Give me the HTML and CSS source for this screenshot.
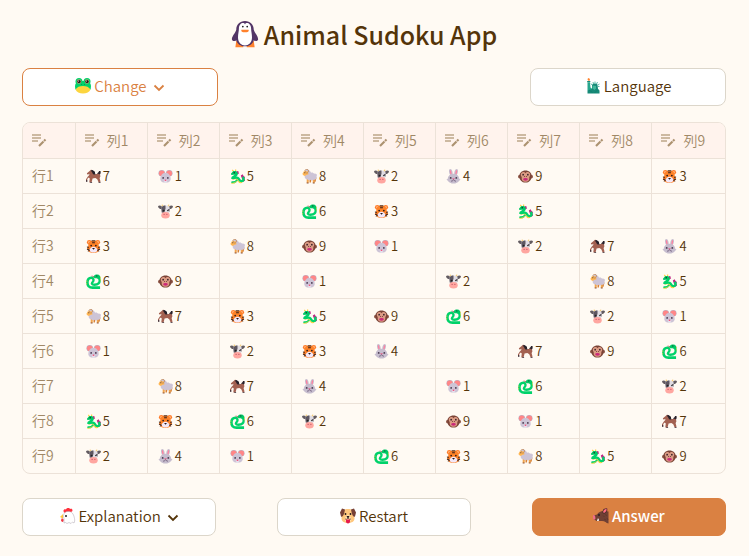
FILE: index.html
```html
<!DOCTYPE html>
<html lang="ja">
<head>
<meta charset="utf-8">
<meta name="viewport" content="width=device-width, initial-scale=1">
<title>Animal Sudoku App</title>
<link rel="stylesheet" href="styles.css">
</head>
<body>
<svg class="sprite" aria-hidden="true">
  <symbol id="mouse" viewBox="0 0 32 32">
    <circle cx="8" cy="9" r="7" fill="#b9b3c6"/><circle cx="24" cy="9" r="7" fill="#b9b3c6"/>
    <circle cx="8" cy="9" r="6" fill="#ff8687"/><circle cx="24" cy="9" r="6" fill="#ff8687"/>
    <path d="M16 8c7 0 10 6 11 12 1 6-5 9-11 9S4 26 5 20C6 14 9 8 16 8z" fill="#cdc4d6"/>
    <circle cx="11" cy="19" r="1.800" fill="#45344b"/><circle cx="21" cy="19" r="1.800" fill="#45344b"/>
    <path d="M12 24h8l-2 5h-4z" fill="#e8e1ee"/><ellipse cx="16" cy="24" rx="2" ry="1.500" fill="#f24d75"/>
  </symbol>
  <symbol id="cow" viewBox="0 0 32 32">
    <path d="M9 6C7 4 8 1 9 0c0 3 3 4 5 5M23 6c2-2 1-5 0-6 0 3-3 4-5 5" fill="#f3c76c"/>
    <path d="M8 5C4 2 1 4 0 5c1 5 4 6 8 6zM24 5c4-3 7-1 8 0-1 5-4 6-8 6z" fill="#625b60"/>
    <path d="M16 3c6 0 9 3 9 9l-2 11H9L7 12c0-6 3-9 9-9z" fill="#e0dce3"/>
    <path d="M7 8c2-4 5-5 9-5v7l-3 9-5-1zM21 11l4-1-1 7z" fill="#5d5660"/>
    <circle cx="12" cy="14" r="2" fill="#222"/><circle cx="21" cy="14" r="1.6" fill="#222"/>
    <ellipse cx="16" cy="24" rx="9" ry="7" fill="#ffa6a0"/>
    <circle cx="13" cy="22" r="1.3" fill="#bb4b60"/><circle cx="19" cy="22" r="1.3" fill="#bb4b60"/>
  </symbol>
  <symbol id="tiger" viewBox="0 0 32 32">
    <circle cx="7" cy="7" r="5" fill="#ff7924"/><circle cx="25" cy="7" r="5" fill="#ff7924"/>
    <circle cx="7" cy="7" r="2.5" fill="#ffb078"/><circle cx="25" cy="7" r="2.5" fill="#ffb078"/>
    <path d="M16 3c8 0 11 5 11 11l3 7c-2 6-7 9-14 9S4 27 2 21l3-7C5 8 8 3 16 3z" fill="#ff8227"/>
    <path d="M10 19c3-3 9-3 12 0l3 4c-2 5-5 6-9 6s-7-1-9-6z" fill="#f2e7f7"/>
    <path d="M12 4h8M13 8h6M2 17l4 1M2 22l5 0M4 26l4-2M30 17l-4 1M30 22l-5 0M28 26l-4-2" stroke="#25191c" stroke-width="2" fill="none"/>
    <circle cx="11" cy="14" r="1.800" fill="#25191c"/><circle cx="21" cy="14" r="1.800" fill="#25191c"/>
    <path d="M13 19h6l-3 4z" fill="#25191c"/>
  </symbol>
  <symbol id="rabbit" viewBox="0 0 32 32">
    <path d="M9 13C5 6 6 0 9 0c4 0 6 7 5 13M23 13c4-7 3-13 0-13-4 0-6 7-5 13" fill="#c6bdce"/>
    <path d="M10 12C8 7 8 2 9 2c2 0 3 5 3 10M22 12c2-5 2-10 1-10-2 0-3 5-3 10" fill="#ff82a0"/>
    <path d="M16 10c7 0 12 5 12 10l3 3-3 2c-2 4-7 6-12 6S6 29 4 25l-3-2 3-3c0-5 5-10 12-10z" fill="#c6bdce"/>
    <circle cx="10" cy="19" r="2" fill="#49394f"/><circle cx="22" cy="19" r="2" fill="#49394f"/>
    <path d="M13 20h6l-3 3z" fill="#ee396b"/><path d="M11 26q3 0 5-3 2 3 5 3" stroke="#6d5a78" stroke-width="2" fill="none"/>
  </symbol>
  <symbol id="dragon" viewBox="0 0 32 32">
    <path d="M23 14l4-3 2 4 3 2-1 4 1 4-4 2zM14 4l4 1 1 5-4 1z" fill="#c02783"/>
    <path d="M8 6L5 2M12 5V1" stroke="#ffce3d" stroke-width="2.500"/>
    <path d="M5 21c4 0 8-2 11 2 3 5 6 7 10 5" stroke="#ffd348" stroke-width="3" fill="none"/>
    <path d="M13 8c5 6-8 8-8 11 3 1 10-3 13 1 2 3 3 6 7 6 5-1 5-5 2-9" stroke="#00d26a" stroke-width="5" fill="none"/>
    <path d="M15 23c-2 5-6 6-12 5" stroke="#00d26a" stroke-width="4" fill="none"/>
    <path d="M2 10l5-6h6l3 4-2 5-6-1-5 1z" fill="#00c865"/>
    <path d="M3 31q9 0 12-6" stroke="#ffd348" stroke-width="2" fill="none"/>
    <circle cx="9" cy="8" r="1.500" fill="#222"/>
  </symbol>
  <symbol id="snake" viewBox="0 0 32 32">
    <path d="M18 6l-6-2M18 6l-6 2" stroke="#ef315b" stroke-width="1.500"/>
    <path d="M13 8C6 7 3 12 3 18c0 8 5 11 11 11h16" fill="none" stroke="#00d26a" stroke-width="5.500"/>
    <path d="M12 8c4 1 5 5 3 8-4 4-3 7 3 7 8 0 12-4 11-11-1-4-3-6-6-6" fill="none" stroke="#00d26a" stroke-width="5"/>
    <path d="M16 6c1-4 4-5 8-5 5 0 7 4 7 8l-5 1-4-1h-4z" fill="#00c865"/>
    <path d="M31 6v10M2 14l-1 10" stroke="#f4c83e" stroke-width="1.500" stroke-dasharray="3 2"/>
    <circle cx="23" cy="4" r="1.500" fill="#174d35"/>
  </symbol>
  <symbol id="horse" viewBox="0 0 32 32">
    <path d="M24 14c-1-7 3-6 4-10h3c1 6-1 8-3 9v6z" fill="#272029"/>
    <path d="M2 9l7-6 2-2 3 4 4 6 9-1c4 2 5 6 2 9l2 8-4 2-3-7-4-3-6 1-2 8-5 1 1-9-2-2-3 3-1 5H0v-4l4-6 3-3v-3l-3 2-2-2z" fill="#a36151"/>
    <path d="M10 3l4-1 5 4 1 6-5-1-2-4z" fill="#272029"/>
    <path d="M0 24h3v3H0zM9 28h4v2H9zM27 28h4v2h-4z" fill="#352833"/>
  </symbol>
  <symbol id="sheep" viewBox="0 0 32 32">
    <path d="M10 20h5l-1 10h-4zM23 20h5l-1 10h-4z" fill="#f2a64e"/>
    <path d="M16 22h4l-1 7h-3zM28 18h3l-2 9h-3z" fill="#d88338"/>
    <path d="M7 4c2-5 6-4 8-1 3 0 3 4 5 5 3-1 4 1 6 2 5-1 7 3 5 6 1 5-3 8-6 7-3 3-6 1-7 0-4 2-6 0-7-1-5 0-6-5-5-8z" fill="#cdc4d6"/>
    <path d="M4 5h8l2 6-5 2-3 2-4-2-1-3z" fill="#ffb654"/>
    <path d="M9 7c-5-3-2-7 2-6 5 1 3 8-2 8" fill="none" stroke="#c18b5b" stroke-width="2"/>
    <circle cx="6" cy="8" r="1.2" fill="#352833"/><path d="M10 29h4v2h-4zM23 29h4v2h-4z" fill="#8a543f"/>
  </symbol>
  <symbol id="monkey" viewBox="0 0 32 32">
    <circle cx="4" cy="16" r="4" fill="#8d5546"/><circle cx="28" cy="16" r="4" fill="#8d5546"/>
    <path d="M16 3c8 0 13 5 13 12 0 9-5 14-13 14S3 24 3 15C3 8 8 3 16 3z" fill="#7b4437"/>
    <path d="M16 9c2-4 10-4 10 3 0 3-2 4-2 6 1 6-3 9-8 9s-9-3-8-9c0-2-2-3-2-6 0-7 8-7 10-3z" fill="#dc9b84"/>
    <circle cx="11" cy="12" r="1.800" fill="#382329"/><circle cx="21" cy="12" r="1.800" fill="#382329"/>
    <path d="M13 16h2M17 16h2" stroke="#743c3d" stroke-width="2"/><ellipse cx="16" cy="22" rx="5" ry="3" fill="#cb2879"/>
  </symbol>
  <symbol id="penguin" viewBox="0 0 32 32">
    <path d="M6 24h8v7H5zM18 24h8l1 7h-9z" fill="#ff822d"/>
    <path d="M16 1c6 0 10 4 10 10 1 4 5 7 5 11 0 2-3 3-5 1-1 4-5 7-10 7S7 27 6 23c-2 2-5 1-5-1 0-4 4-7 5-11C6 5 10 1 16 1z" fill="#533566"/>
    <path d="M16 5c1-3 7-2 7 5 0 3 1 6 1 10 0 6-4 9-8 9s-8-3-8-9c0-4 1-7 1-10 0-7 6-8 7-5z" fill="#fff"/>
    <path d="M12 11h8c1 2-1 3-4 3s-5-1-4-3z" fill="#ff822d"/>
    <circle cx="13.5" cy="7.5" r="1" fill="#222"/><circle cx="18.5" cy="7.5" r="1" fill="#222"/>
  </symbol>
  <symbol id="frog" viewBox="0 0 32 32">
    <circle cx="8" cy="7" r="7" fill="#00d26a"/><circle cx="24" cy="7" r="7" fill="#00d26a"/>
    <path d="M3 9c5-4 21-4 26 0 4 4 3 10 2 14H1C0 19-1 13 3 9z" fill="#00d26a"/>
    <path d="M1 23c3-5 8-7 15-7s12 2 15 7c-2 5-8 8-15 8S3 28 1 23z" fill="#fcd53f"/>
    <circle cx="8" cy="7" r="4.5" fill="#b8996d"/><circle cx="24" cy="7" r="4.5" fill="#b8996d"/>
    <circle cx="8" cy="7" r="3.2" fill="#22191c"/><circle cx="24" cy="7" r="3.2" fill="#22191c"/>
    <circle cx="7" cy="6" r="1" fill="#fff"/><circle cx="23" cy="6" r="1" fill="#fff"/>
    <path d="M13 12v2M19 12v2" stroke="#008b50" stroke-width="1.5"/>
  </symbol>
  <symbol id="liberty" viewBox="0 0 32 32">
    <path d="M6 5L5 2l2-2 3 2-1 4z" fill="#ff822d"/><path d="M4 6h7l-1 3H5z" fill="#168a78"/>
    <path d="M5 9h5l1 10 5 4-4 5-7-3z" fill="#26a68d"/>
    <path d="M14 14l-2-3M17 12l-1-4M20 11V7M23 12l2-4M26 14l3-2M26 17h3" stroke="#26a68d" stroke-width="1.500"/>
    <path d="M14 14c3-4 8-4 11-1l1 9 3 3v6H5v-6l9-3z" fill="#168a78"/>
    <path d="M15 15l7 1v5l-3 3-4-3z" fill="#42b89b"/><path d="M8 24l7 5M26 23l-7 7" stroke="#0d806c" stroke-width="1.500"/>
  </symbol>
  <symbol id="chicken" viewBox="0 0 32 32">
    <path d="M8 9C5 4 9 1 12 3c1-4 7-4 8-1 5-2 6 3 4 5l-9 4z" fill="#ff303b"/>
    <path d="M6 12L0 18l6 3z" fill="#ffc73b"/><path d="M3 21c4-1 5 2 4 5s-4 2-5-1z" fill="#f23845"/>
    <path d="M7 15c1-6 5-9 11-8 7 0 10 8 11 14 1 4 0 7-1 9l-3-2-3 3-4-2-4 2-3-2-3 1V21c-1-2-1-4-1-6z" fill="#fff" stroke="#aaa1ac" stroke-width="1"/>
    <circle cx="12" cy="16" r="2" fill="#222"/>
  </symbol>
  <symbol id="dog" viewBox="0 0 32 32">
    <path d="M16 2c8 0 11 4 12 10l1 9c0 6-6 9-13 9S3 27 3 21l1-9C5 6 8 2 16 2z" fill="#ffc77d"/>
    <path d="M10 3L4 1 0 9l2 8c4 2 6-5 7-9zM22 3l6-2 4 8-2 8c-4 2-6-5-7-9z" fill="#774136"/>
    <path d="M16 13l6 6v7l-6 4-6-4v-7z" fill="#ffe0a8"/>
    <circle cx="11" cy="12" r="1.800" fill="#25191c"/><circle cx="21" cy="12" r="1.800" fill="#25191c"/>
    <path d="M13 16h6l-2 4h-2z" fill="#25191c"/><path d="M10 22q4 2 6-2 2 4 6 2" stroke="#674137" stroke-width="1.500" fill="none"/>
    <path d="M12 23h8v4c0 5-8 5-8 0z" fill="#e51b4c"/>
  </symbol>
  <symbol id="boar" viewBox="0 0 32 32">
    <path d="M31 7v24c-5-1-7-5-13-5H7L1 22v-7l7-2c3-5 9-8 15-7z" fill="#704034"/>
    <path d="M18 9l3-7 7-2c2 6-1 10-6 12z" fill="#54302d"/><path d="M20 8l2-4 5-3c1 4-2 8-5 9z" fill="#ff6d83"/>
    <path d="M0 14l4 1 1 6-3 3-2-3z" fill="#f06f87"/><circle cx="12" cy="14" r="1.800" fill="#211a1d"/>
    <path d="M8 26l2-6 2 4-1 2z" fill="#fff"/><path d="M20 15l3 3M25 12l2 4M22 22l4 2M28 20l2 4" stroke="#5a342d" stroke-width="1.500"/>
  </symbol>
  <symbol id="chevron" viewBox="0 0 12 12"><path d="M1.500 4.500L6 9l4.500-4.500" fill="none" stroke="currentColor" stroke-width="1.800"/></symbol>
  <symbol id="edit" viewBox="0 0 15 15">
    <path d="M0 2h9M0 5h9M0 8h6" stroke="#cdb9a1" stroke-width="2"/><path d="M7 13l4.500-4.500" stroke="#ac9270" stroke-width="2.200"/><path d="M12 8l1.500-1.500" stroke="#ac9270" stroke-width="2.200"/>
  </symbol>
</svg>
<main class="app">
  <h1 class="title"><svg class="title-icon" aria-hidden="true"><use href="#penguin"/></svg>Animal Sudoku App</h1>
  <div class="toolbar top">
    <button class="btn accent" type="button"><svg class="icon" aria-hidden="true"><use href="#frog"/></svg>Change<svg class="chevron" aria-hidden="true"><use href="#chevron"/></svg></button>
    <button class="btn" type="button"><svg class="icon" aria-hidden="true"><use href="#liberty"/></svg>Language</button>
  </div>
  <div class="board-frame">
    <table class="board">
      <colgroup><col class="label-col"><col class="col" span="8"><col></colgroup>
      <thead><tr id="head"></tr></thead>
      <tbody id="body"></tbody>
    </table>
  </div>
  <div class="toolbar bottom">
    <button class="btn" type="button"><svg class="icon" aria-hidden="true"><use href="#chicken"/></svg>Explanation<svg class="chevron" aria-hidden="true"><use href="#chevron"/></svg></button>
    <button class="btn" type="button"><svg class="icon" aria-hidden="true"><use href="#dog"/></svg>Restart</button>
    <button class="btn primary" type="button"><svg class="icon" aria-hidden="true"><use href="#boar"/></svg>Answer</button>
  </div>
</main>
<script src="script.js"></script>
</body>
</html>
```
FILE: styles.css
```css
* { box-sizing: border-box; }
body {
  margin: 0;
  background: #fffaf3;
  color: #543409;
  font-family: "Noto Sans CJK JP", "Noto Sans", sans-serif;
  font-weight: 350;
}
.sprite { position: absolute; width: 0; height: 0; }
.app { padding: 16px 23px 20px 22px; }
.title {
  display: flex;
  align-items: center;
  justify-content: center;
  gap: 5px;
  margin: 0 0 16px;
  padding-right: 20px;
  font-size: 25px;
  line-height: 36px;
  font-weight: 500;
}
.title-icon { width: 28px; height: 28px; }
.toolbar { display: flex; justify-content: space-between; }
.btn {
  display: flex;
  align-items: center;
  justify-content: center;
  gap: 3px;
  width: 27.6%;
  height: 38px;
  padding: 0 0 2px;
  border: 1px solid #dcd6ca;
  border-radius: 8px;
  background: #fff;
  color: #543409;
  font: 350 15px/22px "Noto Sans CJK JP", "Noto Sans", sans-serif;
}
.top .btn { width: 27.8%; }
.accent { border-color: #da8142; color: #da8142; }
.primary { border-color: #da8142; background: #da8142; color: #fff; font-weight: 500; }
.icon { width: 16px; height: 16px; }
.chevron { width: 12px; height: 12px; margin: 2px 0 0 3px; }
.board-frame {
  margin: 16px 0 24px;
  border: 1px solid #ece2d8;
  border-radius: 8px;
  overflow: hidden;
}
.board {
  width: 100%;
  table-layout: fixed;
  border-collapse: separate;
  border-spacing: 0;
}
.label-col { width: 7.5%; }
.col { width: 10.27%; }
.board th, .board td {
  height: 35px;
  padding: 0 0 0 10px;
  border-right: 1px solid #ece2d8;
  border-bottom: 1px solid #ece2d8;
  text-align: left;
  font-size: 13px;
  line-height: 20px;
}
.board th { padding-left: 9px; color: #a08866; font-size: 14px; font-weight: 350; }
.board thead th { height: 36px; padding-bottom: 2px; background: #fff3ed; }
.board tbody th { padding-bottom: 2px; }
.board tr > :last-child { border-right: 0; }
.board tbody tr:last-child > * { height: 34px; border-bottom: 0; }
.cell { display: flex; align-items: center; gap: 2px; }
.heading { display: flex; align-items: center; gap: 7px; }
.animal, .edit { width: 15px; height: 15px; }
.edit { margin-top: 2px; }
```
FILE: script.js
```js
const animals = ["", "mouse", "cow", "tiger", "rabbit", "dragon", "snake", "horse", "sheep", "monkey"];
const rows = [
  "715824903", "020630500", "308910274", "690102085", "873596021",
  "102340796", "087401602", "536209107", "241063859"
];
const icon = (name, cls) => `<svg class="${cls}" aria-hidden="true"><use href="#${name}"/></svg>`;
const headings = ["", 1, 2, 3, 4, 5, 6, 7, 8, 9];

document.getElementById("head").innerHTML = headings
  .map(n => `<th scope="col"><span class="heading">${icon("edit", "edit")}${n ? "列" + n : ""}</span></th>`)
  .join("");

document.getElementById("body").innerHTML = rows
  .map((row, i) => `<tr><th scope="row">行${i + 1}</th>` + [...row]
    .map(n => n === "0" ? "<td></td>" : `<td><span class="cell">${icon(animals[n], "animal")}${n}</span></td>`)
    .join("") + "</tr>")
  .join("");
```
